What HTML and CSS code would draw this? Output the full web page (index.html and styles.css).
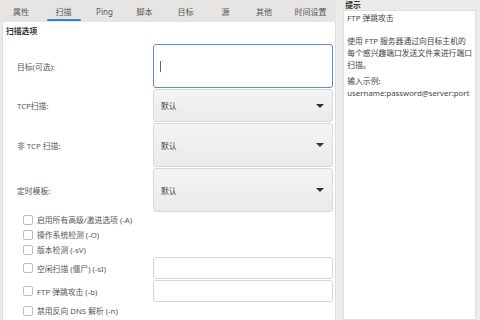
FILE: index.html
```html
<!DOCTYPE html>
<html lang="zh-CN">
<head>
    <meta charset="UTF-8">
    <title>扫描</title>
    <link rel="stylesheet" href="styles.css">
</head>
<body>
    <div class="window">
        <div class="main">
            <div class="tabs">
                <div class="tab">属性</div>
                <div class="tab active">扫描</div>
                <div class="tab">Ping</div>
                <div class="tab">脚本</div>
                <div class="tab">目标</div>
                <div class="tab">源</div>
                <div class="tab">其他</div>
                <div class="tab">时间设置</div>
            </div>

            <div class="page">
                <div class="section-title">扫描选项</div>

                <div class="form">
                    <div class="row row-target">
                        <label class="row-label">目标(可选):</label>
                        <div class="text-input focused"><span class="caret"></span></div>
                    </div>
                    <div class="row row-tcp">
                        <label class="row-label">TCP扫描:</label>
                        <div class="select"><span>默认</span><span class="arrow"></span></div>
                    </div>
                    <div class="row row-tall">
                        <label class="row-label">非 TCP 扫描:</label>
                        <div class="select"><span>默认</span><span class="arrow"></span></div>
                    </div>
                    <div class="row row-tall">
                        <label class="row-label">定时模板:</label>
                        <div class="select"><span>默认</span><span class="arrow"></span></div>
                    </div>
                </div>

                <div class="checks">
                    <div class="check"><span class="box"></span>启用所有高级/激进选项 (-A)</div>
                    <div class="check"><span class="box"></span>操作系统检测 (-O)</div>
                    <div class="check"><span class="box"></span>版本检测 (-sV)</div>
                    <div class="check check-field">
                        <div class="check-label"><span class="box"></span>空闲扫描 (僵尸) (-sI)</div>
                        <div class="text-input small"></div>
                    </div>
                    <div class="check check-field">
                        <div class="check-label"><span class="box"></span>FTP 弹跳攻击 (-b)</div>
                        <div class="text-input small"></div>
                    </div>
                    <div class="check"><span class="box"></span>禁用反向 DNS 解析 (-n)</div>
                    <div class="check"><span class="box"></span></div>
                </div>
            </div>
        </div>

        <div class="side">
            <div class="side-title">提示</div>
            <div class="hint">
                <p class="hint-head">FTP 弹跳攻击</p>
                <p class="hint-body">使用 FTP 服务器通过向目标主机的<br>每个感兴趣端口发送文件来进行端口<br>扫描。</p>
                <p>输入示例:<br>username:password@server:port</p>
            </div>
        </div>
    </div>
</body>
</html>
```

FILE: styles.css
```css
/* Scan options dialog */
:root {
    --frame: #ebebea;
    --tab-bar: #e6e5e3;
    --text: #4a4a4a;
    --border: #d6d6d6;
    --accent: #3d7fd1;
}

* {
    box-sizing: border-box;
}

body {
    margin: 0;
    width: 480px;
    height: 320px;
    overflow: hidden;
    font-family: "Noto Sans", "Noto Sans CJK SC", sans-serif;
    font-size: 7.8px;
    color: var(--text);
    background: var(--frame);
}

.window {
    display: flex;
    height: 320px;
    overflow: hidden;
}

/* Left: tabbed page */
.main {
    width: 338px;
    display: flex;
    flex-direction: column;
    overflow: hidden;
}

.tabs {
    display: grid;
    grid-template-columns: 42px 43px 39px 41px 41px 39px 38px 55px;
    height: 22px;
    flex-shrink: 0;
    background: var(--tab-bar);
}

.tab {
    position: relative;
    display: flex;
    align-items: center;
    justify-content: center;
    color: #555;
    font-size: 8px;
}

.tab.active::after {
    content: "";
    position: absolute;
    left: 5px;
    right: 4px;
    bottom: 1px;
    height: 2px;
    background: var(--accent);
    border-radius: 1px;
}

.page {
    flex: 1;
    background: #fff;
    margin-left: 2px;
    border-left: 1px solid #dcdcdc;
    border-right: 1px solid #dcdcdc;
}

.section-title {
    font-weight: bold;
    color: #333;
    padding: 3px 0 0 3px;
    height: 20px;
}

.form {
    display: flex;
    flex-direction: column;
    gap: 1px;
    padding-right: 2px;
}

.row {
    display: grid;
    grid-template-columns: 150px 1fr;
    align-items: center;
}

.row-target {
    height: 44px;
    margin-top: 2px;
}

.row-tcp {
    height: 33px;
}

.row-tall {
    height: 44px;
}

.row-label {
    padding-left: 14px;
    color: #555;
}

.text-input {
    height: 100%;
    background: #fff;
    border: 1px solid var(--border);
    border-radius: 3px;
    display: flex;
    align-items: center;
}

.text-input.focused {
    border: 1.5px solid #5b8ed6;
    padding-left: 6px;
}

.caret {
    width: 1px;
    height: 11px;
    background: #666;
}

.select {
    height: 100%;
    display: flex;
    align-items: center;
    justify-content: space-between;
    padding: 0 8px 0 7px;
    background: linear-gradient(#f4f4f3, #eaeaea);
    border: 1px solid #d8d8d8;
    border-radius: 3px;
    color: #444;
}

.arrow {
    width: 0;
    height: 0;
    border-left: 4px solid transparent;
    border-right: 4px solid transparent;
    border-top: 4px solid #333;
}

/* Checkbox list */
.checks {
    display: flex;
    flex-direction: column;
    padding: 0 2px 0 20px;
}

.check {
    display: flex;
    align-items: center;
    height: 15px;
    color: #555;
    flex-shrink: 0;
}

.check-label {
    display: flex;
    align-items: center;
}

.check-field {
    display: grid;
    grid-template-columns: 130px 1fr;
    height: 22px;
    margin-bottom: 1px;
}

.text-input.small {
    height: 22px;
}

.box {
    width: 10px;
    height: 10px;
    border: 1px solid #bdbdbd;
    border-radius: 2px;
    background: #fff;
    margin-right: 4px;
    flex-shrink: 0;
}

/* Right: hint panel */
.side {
    flex: 1;
    display: flex;
    flex-direction: column;
    padding: 0 4px 0 7px;
}

.side-title {
    font-weight: bold;
    color: #333;
    height: 10px;
    line-height: 10px;
    padding-left: 2px;
}

.hint {
    flex: 1;
    background: #fff;
    border: 1px solid #dedede;
    padding: 1px 3px;
    line-height: 12px;
    color: #444;
    white-space: nowrap;
}

.hint p {
    margin: 0;
}

.hint-head {
    margin-bottom: 11px !important;
}

.hint-body {
    margin-bottom: 4px !important;
}
```
